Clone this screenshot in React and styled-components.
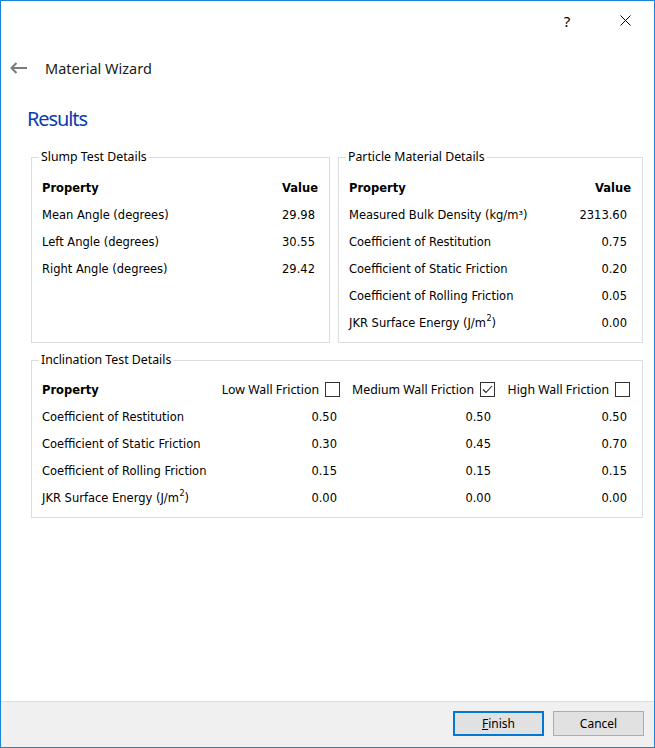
import React from 'react';
import styled, { createGlobalStyle } from 'styled-components';

const Global = createGlobalStyle`
  html, body { margin: 0; padding: 0; background: #ffffff; }
  body { font-family: "Noto Sans", sans-serif; color: #000; }
  * { box-sizing: border-box; }
`;

const Window = styled.div`
  width: 655px;
  height: 748px;
  border: 1px solid #1883d7;
  background: #ffffff;
  display: flex;
  flex-direction: column;
  overflow: hidden;
`;

const TitleBar = styled.div`
  height: 39px;
  display: flex;
  justify-content: flex-end;
`;

const CaptionButton = styled.div`
  width: 58px;
  display: flex;
  align-items: center;
  justify-content: center;
  font: 15px "Noto Sans", sans-serif;
  color: #000;
`;

const Header = styled.div`
  height: 56px;
  display: flex;
  align-items: center;
  padding-left: 9px;
  gap: 18px;
`;

const HeaderTitle = styled.span`
  font: 14.5px "Noto Sans", sans-serif;
  color: #1a1a1a;
`;

const Body = styled.div`
  flex: 1;
  padding: 0 11px 0 30px;
  display: flex;
  flex-direction: column;
`;

const PageTitle = styled.h1`
  margin: 9px 0 16px -4px;
  font: 20px/28px "Noto Sans", sans-serif;
  font-weight: normal;
  letter-spacing: -1.1px;
  color: #0a3cb4;
`;

const TopGrid = styled.div`
  display: grid;
  grid-template-columns: 299px 305px;
  column-gap: 8px;
  margin-bottom: 9px;
`;

const Group = styled.fieldset`
  margin: 0;
  min-width: 0;
  border: 1px solid #dcdcdc;
  padding: ${(p) => p.$pad};
`;

const Legend = styled.legend`
  margin-left: -3px;
  padding: 0 2px;
  font: 12.3px/16px "Noto Sans", sans-serif;
  color: #000;
`;

const Table = styled.div`
  display: grid;
  grid-template-columns: ${(p) => p.$cols};
  grid-auto-rows: 27px;
`;

const Cell = styled.div`
  display: flex;
  align-items: center;
  justify-content: ${(p) => (p.$right ? 'flex-end' : 'flex-start')};
  padding-right: ${(p) => p.$pr || 0}px;
  font: ${(p) => (p.$bold ? 'bold' : 'normal')} 11.5px "DejaVu Sans", sans-serif;
  color: #000;
  white-space: nowrap;
  min-width: 0;
`;

const HeadLabel = styled.div`
  display: flex;
  align-items: center;
  justify-content: flex-end;
  gap: 6px;
  font: 12.3px "Noto Sans", sans-serif;
  color: #000;
  white-space: nowrap;
`;

const Box = styled.span`
  width: 15px;
  height: 15px;
  border: 1px solid #333;
  background: #fff;
  display: inline-flex;
  align-items: center;
  justify-content: center;
`;

const Footer = styled.div`
  height: 46px;
  border-top: 1px solid #dfdfdf;
  background: #f0f0f0;
  display: flex;
  justify-content: flex-end;
  align-items: flex-start;
  padding: 9px 10px 0 0;
  gap: 9px;
`;

const Button = styled.button`
  width: 91px;
  height: 25px;
  margin: 0;
  padding: 0;
  background: #e1e1e1;
  border: ${(p) => (p.$default ? '2px solid #0078d7' : '1px solid #adadad')};
  font: 12px "Noto Sans", sans-serif;
  color: #000;
  display: flex;
  align-items: center;
  justify-content: center;
`;

const Sup = styled.span`
  font-size: 8px;
  position: relative;
  top: -4px;
  margin-left: 0.5px;
`;

const Check = ({ checked }) => (
  <Box>
    {checked && (
      <svg width="11" height="9" viewBox="0 0 11 9">
        <path d="M1 4.5 L4 7.5 L10 1" fill="none" stroke="#222" strokeWidth="1.1" />
      </svg>
    )}
  </Box>
);

const slump = [
  ['Mean Angle (degrees)', '29.98'],
  ['Left Angle (degrees)', '30.55'],
  ['Right Angle (degrees)', '29.42'],
];

const particle = [
  ['Measured Bulk Density (kg/m³)', '2313.60'],
  ['Coefficient of Restitution', '0.75'],
  ['Coefficient of Static Friction', '0.20'],
  ['Coefficient of Rolling Friction', '0.05'],
  [<>JKR Surface Energy (J/m<Sup>2</Sup>)</>, '0.00'],
];

const incl = [
  ['Coefficient of Restitution', '0.50', '0.50', '0.50'],
  ['Coefficient of Static Friction', '0.30', '0.45', '0.70'],
  ['Coefficient of Rolling Friction', '0.15', '0.15', '0.15'],
  [<>JKR Surface Energy (J/m<Sup>2</Sup>)</>, '0.00', '0.00', '0.00'],
];

export default function App() {
  return (
    <>
      <Global />
      <Window>
        <TitleBar>
          <CaptionButton>?</CaptionButton>
          <CaptionButton>
            <svg width="11" height="11" viewBox="0 0 11 11">
              <path d="M0.5 0.5 L10.5 10.5 M10.5 0.5 L0.5 10.5" stroke="#000" strokeWidth="1" />
            </svg>
          </CaptionButton>
        </TitleBar>
        <Header>
          <svg width="17" height="12" viewBox="0 0 17 12">
            <path d="M1.5 6 H17 M6.5 1 L1.5 6 L6.5 11" fill="none" stroke="#7a7a7a" strokeWidth="2" />
          </svg>
          <HeaderTitle>Material Wizard</HeaderTitle>
        </Header>
        <Body>
          <PageTitle>Results</PageTitle>
          <TopGrid>
            <Group $pad="9px 11px 6px 10px">
              <Legend>Slump Test Details</Legend>
              <Table $cols="minmax(0, 1fr) auto">
                <Cell $bold>Property</Cell>
                <Cell $bold>Value</Cell>
                {slump.map(([k, v]) => (
                  <React.Fragment key={k}>
                    <Cell>{k}</Cell>
                    <Cell>{v}</Cell>
                  </React.Fragment>
                ))}
              </Table>
            </Group>
            <Group $pad="9px 11px 6px 10px">
              <Legend>Particle Material Details</Legend>
              <Table $cols="minmax(0, 1fr) auto">
                <Cell $bold>Property</Cell>
                <Cell $bold $right>Value</Cell>
                {particle.map(([k, v], i) => (
                  <React.Fragment key={i}>
                    <Cell>{k}</Cell>
                    <Cell $right $pr={4}>{v}</Cell>
                  </React.Fragment>
                ))}
              </Table>
            </Group>
          </TopGrid>
          <Group $pad="8px 12px 6px 10px">
            <Legend>Inclination Test Details</Legend>
            <Table $cols="minmax(0, 1fr) 155px 155px 135px">
              <Cell $bold>Property</Cell>
              <HeadLabel>Low Wall Friction <Check /></HeadLabel>
              <HeadLabel>Medium Wall Friction <Check checked /></HeadLabel>
              <HeadLabel>High Wall Friction <Check /></HeadLabel>
              {incl.map(([k, a, b, c], i) => (
                <React.Fragment key={i}>
                  <Cell>{k}</Cell>
                  <Cell $right $pr={3}>{a}</Cell>
                  <Cell $right $pr={4}>{b}</Cell>
                  <Cell $right $pr={3}>{c}</Cell>
                </React.Fragment>
              ))}
            </Table>
          </Group>
        </Body>
        <Footer>
          <Button $default><span><u>F</u>inish</span></Button>
          <Button>Cancel</Button>
        </Footer>
      </Window>
    </>
  );
}
